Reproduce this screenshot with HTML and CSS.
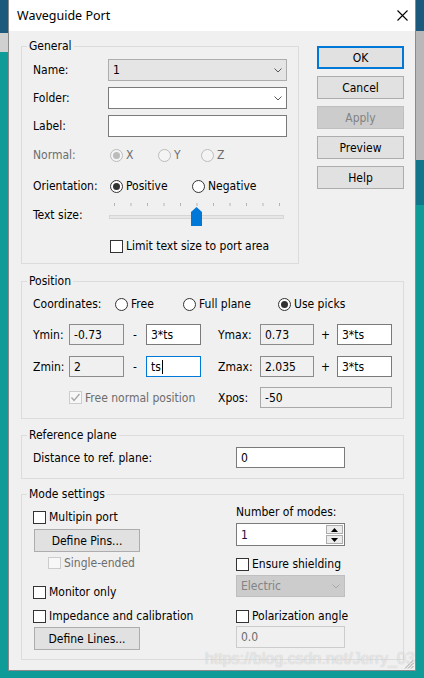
FILE: index.html
```html
<!DOCTYPE html>
<html>
<head>
<meta charset="utf-8">
<title>Waveguide Port</title>
<link rel="stylesheet" href="styles.css">
</head>
<body>
<div class="window">
  <div class="titlebar">
    <span class="title">Waveguide Port</span>
    <svg class="close" width="11" height="11" viewBox="0 0 11 11"><path d="M0.5 0.5L10.5 10.5M10.5 0.5L0.5 10.5" stroke="#000" stroke-width="1.1" fill="none"/></svg>
  </div>
  <div class="content">
    <div class="top">
      <fieldset class="group general">
        <legend>General</legend>
        <div class="gbody">
          <div class="row r-name">
            <span class="lbl">Name:</span>
            <div class="combo list"><span>1</span><svg class="chev" width="8" height="5" viewBox="0 0 8 5"><polyline points="0.5,0.5 4,4 7.5,0.5" fill="none" stroke="#5a5a5a"/></svg></div>
          </div>
          <div class="row r-folder">
            <span class="lbl">Folder:</span>
            <div class="combo"><span></span><svg class="chev" width="8" height="5" viewBox="0 0 8 5"><polyline points="0.5,0.5 4,4 7.5,0.5" fill="none" stroke="#5a5a5a"/></svg></div>
          </div>
          <div class="row r-label">
            <span class="lbl">Label:</span>
            <div class="field wide"></div>
          </div>
          <div class="row r-normal">
            <span class="lbl dis">Normal:</span>
            <div class="ritem w48 first"><span class="rb dis on"></span><span class="dis">X</span></div>
            <div class="ritem w43"><span class="rb dis"></span><span class="dis">Y</span></div>
            <div class="ritem"><span class="rb dis"></span><span class="dis">Z</span></div>
          </div>
          <div class="row r-orient">
            <span class="lbl">Orientation:</span>
            <div class="ritem w82 first"><span class="rb on"></span><span>Positive</span></div>
            <div class="ritem"><span class="rb"></span><span>Negative</span></div>
          </div>
          <div class="row r-slider">
            <span class="lbl">Text size:</span>
            <svg class="slider" width="178" height="26" viewBox="0 0 178 26">
              <g stroke="#b4b4b4" stroke-width="1">
                <line x1="6.5" y1="1" x2="6.5" y2="4"/>
                <line x1="23" y1="1" x2="23" y2="4"/>
                <line x1="39.5" y1="1" x2="39.5" y2="4"/>
                <line x1="56" y1="1" x2="56" y2="4"/>
                <line x1="72.5" y1="1" x2="72.5" y2="4"/>
                <line x1="89" y1="1" x2="89" y2="4"/>
                <line x1="105.5" y1="1" x2="105.5" y2="4"/>
                <line x1="122" y1="1" x2="122" y2="4"/>
                <line x1="138.5" y1="1" x2="138.5" y2="4"/>
                <line x1="155" y1="1" x2="155" y2="4"/>
                <line x1="171.5" y1="1" x2="171.5" y2="4"/>
              </g>
              <rect x="1.5" y="13.5" width="174" height="3" fill="#e7e7e7" stroke="#d6d6d6"/>
              <polygon points="83,10 88.5,5 94,10 94,24 83,24" fill="#0078d7"/>
            </svg>
          </div>
          <div class="row r-limit">
            <span class="cb"></span><span>Limit text size to port area</span>
          </div>
        </div>
      </fieldset>
      <div class="buttons">
        <div class="btn default">OK</div>
        <div class="btn">Cancel</div>
        <div class="btn disabled">Apply</div>
        <div class="btn">Preview</div>
        <div class="btn">Help</div>
      </div>
    </div>

    <fieldset class="group position">
      <legend>Position</legend>
      <div class="gbody">
        <div class="row r-coords">
          <span class="lbl lbl-coords">Coordinates:</span>
          <div class="ritem w68"><span class="rb"></span><span>Free</span></div>
          <div class="ritem w95"><span class="rb"></span><span>Full plane</span></div>
          <div class="ritem"><span class="rb on"></span><span>Use picks</span></div>
        </div>
        <div class="cgrid r-y">
          <span>Ymin:</span>
          <div class="field ro">-0.73</div>
          <span class="sep">-</span>
          <div class="field">3*ts</div>
          <span class="maxlbl">Ymax:</span>
          <div class="field ro">0.73</div>
          <span class="sep">+</span>
          <div class="field">3*ts</div>
        </div>
        <div class="cgrid r-z">
          <span>Zmin:</span>
          <div class="field ro">2</div>
          <span class="sep">-</span>
          <div class="field focus">ts<span class="caret"></span></div>
          <span class="maxlbl">Zmax:</span>
          <div class="field ro">2.035</div>
          <span class="sep">+</span>
          <div class="field">3*ts</div>
        </div>
        <div class="cgrid r-x">
          <span></span>
          <div class="freenorm"><span class="cb dis chk"><svg width="11" height="11" viewBox="0 0 11 11"><polyline points="1.5,5.5 4,8.5 9.5,2" fill="none" stroke="#a8a8a8" stroke-width="1.4"/></svg></span><span class="dis">Free normal position</span></div>
          <span class="maxlbl">Xpos:</span>
          <div class="field ro light xpos">-50</div>
        </div>
      </div>
    </fieldset>

    <fieldset class="group refplane">
      <legend>Reference plane</legend>
      <div class="gbody">
        <div class="row r-dist">
          <span class="lbl lbl-dist">Distance to ref. plane:</span>
          <div class="field dist">0</div>
        </div>
      </div>
    </fieldset>

    <fieldset class="group modes">
      <legend>Mode settings</legend>
      <div class="gbody cols">
        <div class="col-left">
          <div class="row m-multipin"><span class="cb"></span><span>Multipin port</span></div>
          <div class="btn small m-pins">Define Pins...</div>
          <div class="row m-single"><span class="cb dis"></span><span class="dis">Single-ended</span></div>
          <div class="row m-monitor"><span class="cb"></span><span>Monitor only</span></div>
          <div class="row m-imp"><span class="cb"></span><span>Impedance and calibration</span></div>
          <div class="btn small m-lines">Define Lines...</div>
        </div>
        <div class="col-right">
          <div class="m-numlbl">Number of modes:</div>
          <div class="spin">
            <span class="val">1</span>
            <span class="arrows">
              <span class="sbtn"><svg width="7" height="4" viewBox="0 0 7 4"><polygon points="0,4 3.5,0 7,4" fill="#000"/></svg></span>
              <span class="sbtn"><svg width="7" height="4" viewBox="0 0 7 4"><polygon points="0,0 3.5,4 7,0" fill="#000"/></svg></span>
            </span>
          </div>
          <div class="row m-shield"><span class="cb"></span><span>Ensure shielding</span></div>
          <div class="combo disabled m-electric"><span>Electric</span><svg class="chev" width="8" height="5" viewBox="0 0 8 5"><polyline points="0.5,0.5 4,4 7.5,0.5" fill="none" stroke="#a8a8a8"/></svg></div>
          <div class="row m-polar"><span class="cb"></span><span>Polarization angle</span></div>
          <div class="field disabled m-angle">0.0</div>
        </div>
      </div>
    </fieldset>
  </div>
  <svg class="grip" width="10" height="10" viewBox="0 0 10 10"><g stroke="#a0a0a0" stroke-width="1"><line x1="9.5" y1="1" x2="1" y2="9.5"/><line x1="9.5" y1="4" x2="4" y2="9.5"/><line x1="9.5" y1="7" x2="7" y2="9.5"/></g></svg>
  <div class="watermark">https://blog.csdn.net/Jerry_03</div>
</div>
</body>
</html>
```

FILE: styles.css
```css
* { box-sizing: border-box; }
html, body { margin: 0; padding: 0; }
body {
  width: 424px;
  height: 678px;
  overflow: hidden;
  font-family: "DejaVu Sans Condensed", "DejaVu Sans", sans-serif;
  font-stretch: condensed;
  font-size: 12px;
  color: #000;
  background:
    linear-gradient(to bottom, #1b5a7c 0 33px, #d0d0d0 33px 52px, #0f9b98 52px) left top / 8px 100% no-repeat,
    linear-gradient(to bottom, #1b5a7c 0 31px, #b8b8b8 31px 160px, #12768a 160px 205px, #0f9b98 205px) right top / 8px 100% no-repeat,
    #0f9b98;
}
.window {
  position: relative;
  margin-left: 8px;
  width: 408px;
  height: 671px;
  background: #f0f0f0;
  border: 1px solid #8a8a8a;
  border-top: 0;
}
.titlebar {
  height: 31px;
  background: #fff;
  display: flex;
  align-items: center;
  justify-content: space-between;
  padding: 0 7px 0 8px;
}
.title {
  font-family: "Noto Sans", "Open Sans", sans-serif;
  font-size: 12.5px;
  font-stretch: normal;
}
.close { display: block; }
.content { padding: 8px 11px 0 12px; }
.top { display: flex; justify-content: space-between; align-items: flex-start; }

fieldset.group {
  margin: 0;
  padding: 0;
  border: 1px solid #dcdcdc;
  min-width: 0;
}
fieldset.group legend {
  margin-left: 5px;
  padding: 0 2px;
  line-height: 15px;
  height: 15px;
}
.gbody { padding: 0 11px 8px 11px; }
fieldset.general { width: 278px; }
.general .gbody { padding-bottom: 7px; }
fieldset.position { margin-top: 10px; }
.position .gbody { padding-bottom: 10px; }
fieldset.refplane { margin-top: 9px; }
.refplane .gbody { padding-bottom: 10px; }
fieldset.modes { margin-top: 8px; }
.modes .gbody { padding-bottom: 9px; }

.row { display: flex; align-items: center; height: 20px; white-space: nowrap; }
.lbl { width: 75px; flex: none; }
.dis { color: #6d6d6d; }

.r-name { margin-top: 5px; height: 22px; }
.r-folder, .r-label { margin-top: 6px; height: 22px; }
.r-normal { margin-top: 8px; }
.r-orient { margin-top: 11px; }
.r-slider { margin-top: 6px; height: 26px; }
.r-limit { margin-top: 8px; padding-left: 77px; }
.slider { display: block; }

.combo {
  width: 179px;
  height: 22px;
  border: 1px solid #7a7a7a;
  background: #fff;
  display: flex;
  align-items: center;
  justify-content: space-between;
  padding: 0 4px 0 4px;
}
.combo.list { background: #e5e5e5; border-color: #adadad; }
.combo.disabled { background: #cccccc; border-color: #bfbfbf; color: #838383; width: 109px; height: 22px; }
.chev { display: block; }

.field {
  height: 21px;
  border: 1px solid #7a7a7a;
  background: #fff;
  padding-left: 4px;
  display: flex;
  align-items: center;
  white-space: nowrap;
}
.field.wide { width: 179px; height: 22px; }
.field.ro { background: #f0f0f0; border-color: #8c8c8c; }
.field.light { border-color: #a8a8a8; }
.field.focus { border-color: #0078d7; }
.field.disabled { background: #f0f0f0; border-color: #cccccc; color: #6d6d6d; }
.caret { display: inline-block; width: 1px; height: 14px; background: #000; margin-left: 1px; }

.ritem { display: flex; align-items: center; }
.ritem.first { margin-left: 2px; }
.w48 { width: 48px; }
.w43 { width: 43px; }
.w82 { width: 82px; }
.w68 { width: 68px; }
.w95 { width: 95px; }

.rb {
  position: relative;
  width: 13px;
  height: 13px;
  flex: none;
  border: 1px solid #333;
  border-radius: 50%;
  background: #fff;
  margin-right: 3px;
}
.rb.on::after {
  content: "";
  position: absolute;
  left: 2px;
  top: 2px;
  width: 7px;
  height: 7px;
  border-radius: 50%;
  background: #333;
}
.rb.dis { border-color: #bcbcbc; background: #f4f4f4; }
.rb.dis.on::after { background: #bcbcbc; }

.cb {
  width: 13px;
  height: 13px;
  flex: none;
  border: 1px solid #333;
  background: #fff;
  margin-right: 3px;
  display: flex;
  align-items: center;
  justify-content: center;
}
.cb.dis { border-color: #cccccc; background: #f7f7f7; }
.cb svg { display: block; }

.buttons {
  width: 87px;
  margin-top: 7px;
  display: flex;
  flex-direction: column;
  gap: 7px;
}
.btn {
  height: 23px;
  border: 1px solid #adadad;
  background: #e1e1e1;
  display: flex;
  align-items: center;
  justify-content: center;
  white-space: nowrap;
}
.btn.default { border: 2px solid #0078d7; }
.btn.disabled { background: #cccccc; border-color: #bfbfbf; color: #838383; }

.r-coords { margin-top: 5px; }
.lbl-coords { width: 82px; }
.cgrid {
  display: grid;
  grid-template-columns: 36px 55px 22px 55px 59px 54px 23px 55px;
  align-items: center;
  height: 21px;
  white-space: nowrap;
}
.r-y { margin-top: 10px; }
.r-z { margin-top: 11px; }
.r-x { margin-top: 10px; }
.sep { text-align: center; }
.maxlbl { padding-left: 17px; }
.freenorm { grid-column: 2 / 5; display: flex; align-items: center; }
.xpos { grid-column: 6 / 9; }

.r-dist { margin-top: 4px; height: 21px; }
.lbl-dist { width: 203px; }
.field.dist { width: 109px; }

.cols { display: flex; }
.col-left { width: 203px; flex: none; }
.col-right { width: 109px; }
.m-multipin { margin-top: 5px; }
.btn.small { width: 106px; margin-left: 1px; }
.m-pins { margin-top: 2px; }
.m-single { margin-top: 1px; height: 19px; padding-left: 15px; }
.m-single .cb { width: 13px; height: 12px; }
.m-monitor { margin-top: 10px; }
.m-imp { margin-top: 4px; }
.m-lines { margin-top: 1px; }

.m-numlbl { margin-top: 2px; height: 17px; line-height: 17px; white-space: nowrap; }
.spin {
  margin-top: 2px;
  width: 109px;
  height: 23px;
  border: 1px solid #7a7a7a;
  background: #fff;
  display: flex;
}
.spin .val { flex: 1; padding-left: 4px; display: flex; align-items: center; color: #201040; }
.spin .arrows { width: 18px; display: flex; flex-direction: column; gap: 1px; padding: 1px 1px 1px 0; }
.sbtn {
  flex: 1;
  border: 1px solid #adadad;
  background: #ececec;
  display: flex;
  align-items: center;
  justify-content: center;
}
.sbtn svg { display: block; }
.m-shield { margin-top: 8px; }
.m-electric { margin-top: 1px; }
.m-polar { margin-top: 9px; }
.m-angle { width: 109px; height: 22px; }

.grip { position: absolute; right: 1px; bottom: 1px; }
.watermark {
  position: absolute;
  left: 196px;
  top: 650px;
  font-family: "Liberation Sans", Arial, sans-serif;
  font-stretch: normal;
  font-size: 16px;
  line-height: 18px;
  color: rgba(255, 255, 255, 0.6);
  text-shadow: 0 0 1px rgba(80, 80, 80, 0.35);
  white-space: nowrap;
  pointer-events: none;
}
```
